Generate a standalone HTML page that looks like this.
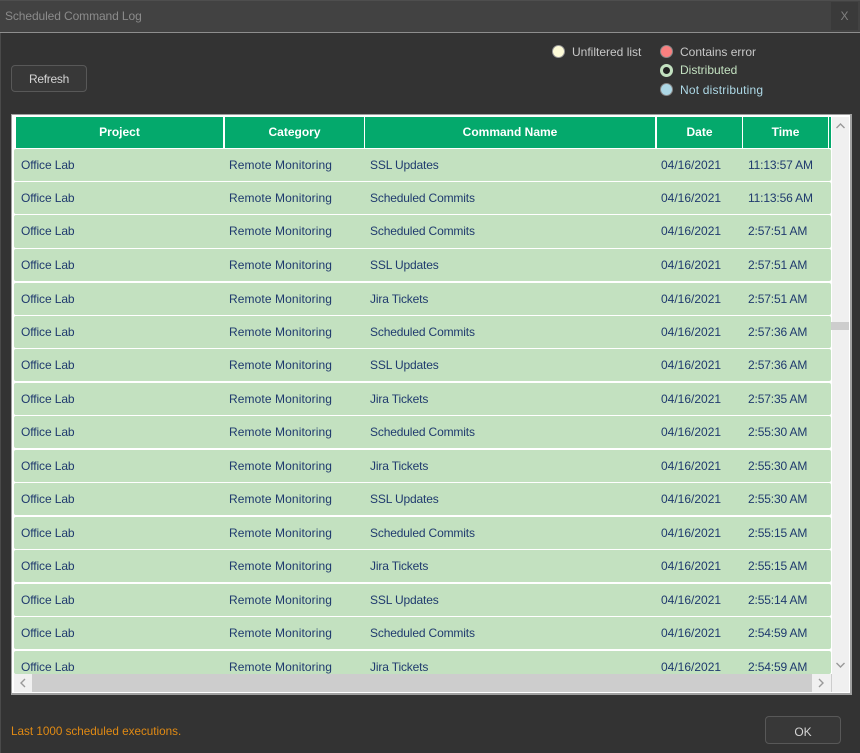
<!DOCTYPE html>
<html><head><meta charset="utf-8">
<style>
html,body{margin:0;padding:0;width:860px;height:753px;overflow:hidden;background:#333;font-family:"Liberation Sans",sans-serif;font-size:12px}
div,span{position:absolute;white-space:nowrap;box-sizing:border-box}
.title{left:0;top:0;width:860px;height:33px;background:#424242;border-bottom:1px solid #8e8e8e;border-top:1px solid #4e4e4e}
.btn{background:#383838;border:1px solid #585858;border-radius:4px;color:#d4d4d4;text-align:center;font-size:12px}
.dot{width:13px;height:13px;border-radius:50%}
.lg{font-size:12px;line-height:16px}
.tbl{left:11px;top:114px;width:841px;height:581px;background:#fff;border:1px solid #a0a0a0;border-width:1px 2px 2px 1px}
.h{top:117px;height:31px;background:#04a96c;color:#fff;font-weight:bold;text-align:center;line-height:31px;font-size:12px}
.r{left:14px;width:817px;height:32px;background:#c3e1c0;border-radius:2px;color:#1f3a6e}
.r span{top:8px;line-height:16px;font-size:12px}
.a{left:7px;letter-spacing:-.1px}.b{left:215px;letter-spacing:.1px}.c{left:356px;letter-spacing:-.15px}.d{left:647px}.e{left:734px;letter-spacing:-.15px}
</style></head><body>
<div class="title"></div>
<div style="left:5px;top:8px;color:#8b8b8b;font-size:12px;line-height:17px;letter-spacing:-.1px">Scheduled Command Log</div>
<div style="left:831px;top:2px;width:27px;height:28px;background:#3a3a3a;color:#808080;text-align:center;line-height:29px;font-size:12px">X</div>
<div style="left:0;top:33px;width:1px;height:720px;background:#4a4a4a"></div>
<div class="btn" style="left:11px;top:65px;width:76px;height:27px;line-height:27px;letter-spacing:-.3px">Refresh</div>
<div class="dot" style="left:552px;top:45px;background:#fdfbd8;border:1px solid #999"></div>
<div class="lg" style="left:572px;top:44px;color:#c8c8c8">Unfiltered list</div>
<div class="dot" style="left:660px;top:45px;background:#f98080;border:1px solid #888"></div>
<div class="lg" style="left:680px;top:44px;color:#c8c8c8">Contains error</div>
<div class="dot" style="left:660px;top:64px;background:#222;border:3px solid #c3e1c0"></div>
<div class="lg" style="left:680px;top:62px;color:#c3e1c0">Distributed</div>
<div class="dot" style="left:660px;top:83px;background:#add8e6;border:1px solid #888"></div>
<div class="lg" style="left:680px;top:82px;color:#add8e6;letter-spacing:.2px">Not distributing</div>

<div class="tbl"></div>
<div class="h" style="left:16px;width:207px">Project</div>
<div class="h" style="left:225px;width:139px">Category</div>
<div class="h" style="left:365px;width:290px">Command Name</div>
<div class="h" style="left:657px;width:85px">Date</div>
<div class="h" style="left:743px;width:85px">Time</div>
<div class="h" style="left:829px;width:2px"></div>

<div class="r" style="top:149px"><span class="a">Office Lab</span><span class="b">Remote Monitoring</span><span class="c">SSL Updates</span><span class="d">04/16/2021</span><span class="e">11:13:57 AM</span></div>
<div class="r" style="top:182px"><span class="a">Office Lab</span><span class="b">Remote Monitoring</span><span class="c">Scheduled Commits</span><span class="d">04/16/2021</span><span class="e">11:13:56 AM</span></div>
<div class="r" style="top:215px;height:33px"><span class="a">Office Lab</span><span class="b">Remote Monitoring</span><span class="c">Scheduled Commits</span><span class="d">04/16/2021</span><span class="e">2:57:51 AM</span></div>
<div class="r" style="top:249px"><span class="a">Office Lab</span><span class="b">Remote Monitoring</span><span class="c">SSL Updates</span><span class="d">04/16/2021</span><span class="e">2:57:51 AM</span></div>
<div class="r" style="top:283px"><span class="a">Office Lab</span><span class="b">Remote Monitoring</span><span class="c">Jira Tickets</span><span class="d">04/16/2021</span><span class="e">2:57:51 AM</span></div>
<div class="r" style="top:316px"><span class="a">Office Lab</span><span class="b">Remote Monitoring</span><span class="c">Scheduled Commits</span><span class="d">04/16/2021</span><span class="e">2:57:36 AM</span></div>
<div class="r" style="top:349px"><span class="a">Office Lab</span><span class="b">Remote Monitoring</span><span class="c">SSL Updates</span><span class="d">04/16/2021</span><span class="e">2:57:36 AM</span></div>
<div class="r" style="top:383px"><span class="a">Office Lab</span><span class="b">Remote Monitoring</span><span class="c">Jira Tickets</span><span class="d">04/16/2021</span><span class="e">2:57:35 AM</span></div>
<div class="r" style="top:416px"><span class="a">Office Lab</span><span class="b">Remote Monitoring</span><span class="c">Scheduled Commits</span><span class="d">04/16/2021</span><span class="e">2:55:30 AM</span></div>
<div class="r" style="top:450px"><span class="a">Office Lab</span><span class="b">Remote Monitoring</span><span class="c">Jira Tickets</span><span class="d">04/16/2021</span><span class="e">2:55:30 AM</span></div>
<div class="r" style="top:483px"><span class="a">Office Lab</span><span class="b">Remote Monitoring</span><span class="c">SSL Updates</span><span class="d">04/16/2021</span><span class="e">2:55:30 AM</span></div>
<div class="r" style="top:517px"><span class="a">Office Lab</span><span class="b">Remote Monitoring</span><span class="c">Scheduled Commits</span><span class="d">04/16/2021</span><span class="e">2:55:15 AM</span></div>
<div class="r" style="top:550px"><span class="a">Office Lab</span><span class="b">Remote Monitoring</span><span class="c">Jira Tickets</span><span class="d">04/16/2021</span><span class="e">2:55:15 AM</span></div>
<div class="r" style="top:584px"><span class="a">Office Lab</span><span class="b">Remote Monitoring</span><span class="c">SSL Updates</span><span class="d">04/16/2021</span><span class="e">2:55:14 AM</span></div>
<div class="r" style="top:617px"><span class="a">Office Lab</span><span class="b">Remote Monitoring</span><span class="c">Scheduled Commits</span><span class="d">04/16/2021</span><span class="e">2:54:59 AM</span></div>
<div class="r" style="top:651px;height:23px"><span class="a">Office Lab</span><span class="b">Remote Monitoring</span><span class="c">Jira Tickets</span><span class="d">04/16/2021</span><span class="e">2:54:59 AM</span></div>

<div style="left:832px;top:117px;width:17px;height:557px;background:#f0f0f0"></div>
<div style="left:831px;top:322px;width:18px;height:8px;background:#cdcdcd"></div>
<div style="left:14px;top:674px;width:818px;height:18px;background:#cdcdcd"></div>
<div style="left:14px;top:674px;width:18px;height:18px;background:#f0f0f0"></div>
<div style="left:812px;top:674px;width:19px;height:18px;background:#f0f0f0"></div>
<div style="left:832px;top:674px;width:17px;height:18px;background:#f0f0f0"></div>
<svg style="position:absolute;left:0;top:0" width="860" height="753" fill="none" stroke="#999" stroke-width="1.4">
<path d="M836.500 128l4-4 4 4"/>
<path d="M836.500 663l4 4 4-4"/>
<path d="M25 679l-4 4 4 4"/>
<path d="M819 679l4 4-4 4"/>
</svg>
<div style="left:11px;top:724px;color:#e08a14;font-size:11.700px;line-height:16px">Last 1000 scheduled executions.</div>
<div class="btn" style="left:765px;top:716px;width:76px;height:28px;line-height:30px">OK</div>
</body></html>
